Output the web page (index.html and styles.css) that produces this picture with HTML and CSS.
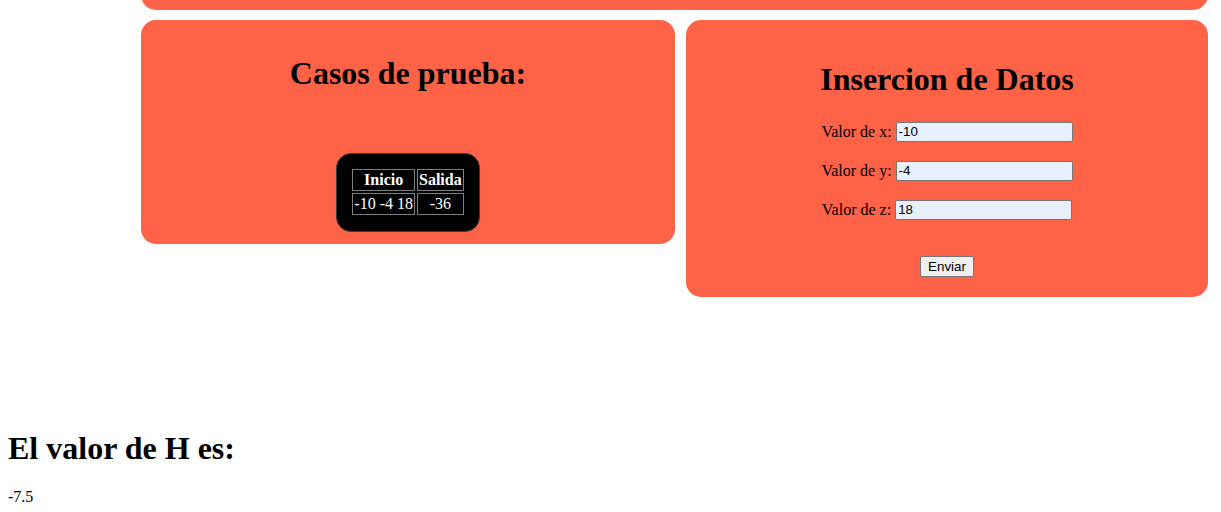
FILE: index.html
```html
<!DOCTYPE html>
<html lang="es">
<head>
<meta charset="utf-8">
<title>Casos de prueba</title>
<link rel="stylesheet" href="styles.css">
</head>
<body>
<div class="top-clip"><div class="top-bar"></div></div>
<div class="cards">
  <section class="card card-left">
    <h1 class="card-title">Casos de prueba:</h1>
    <div class="table-box">
      <table class="cases">
        <tr><th>Inicio</th><th>Salida</th></tr>
        <tr><td>-10 -4 18</td><td>-36</td></tr>
      </table>
    </div>
  </section>
  <section class="card card-right">
    <h1 class="card-title">Insercion de Datos</h1>
    <form class="data-form">
      <div class="row"><label for="x">Valor de x:</label><input id="x" class="field" type="text" value="-10"></div>
      <div class="row"><label for="y">Valor de y:</label><input id="y" class="field" type="text" value="-4"></div>
      <div class="row"><label for="z">Valor de z:</label><input id="z" class="field field-z" type="text" value="18"></div>
      <div class="row row-btn"><button class="send" type="button">Enviar</button></div>
    </form>
  </section>
</div>
<h1 class="result-title">El valor de H es:</h1>
<p class="result">-7.5</p>
</body>
</html>
```
FILE: styles.css
```css
html, body {
  background: #ffffff;
}
body {
  margin: 0 8px 8px 8px;
  font-family: "Liberation Serif", "Times New Roman", serif;
  font-size: 16px;
  color: #000;
}
.top-clip {
  margin-left: 133px;
  width: 1067px;
  height: 10px;
  overflow: hidden;
  display: flex;
  flex-direction: column;
  justify-content: flex-end;
}
.top-bar {
  flex: 0 0 30px;
  background: #ff6347;
  border-radius: 15px;
}
.cards {
  margin-top: 10px;
  margin-left: 133px;
  display: flex;
  align-items: flex-start;
  gap: 11px;
}
.card {
  background: #ff6347;
  border-radius: 15px;
  box-sizing: border-box;
  display: flex;
  flex-direction: column;
  align-items: center;
}
.card-left {
  width: 534px;
  height: 224px;
  padding: 14px;
}
.card-right {
  width: 522px;
  height: 277px;
  padding: 20px;
}
.card-title {
  font-size: 32px;
  font-weight: bold;
  margin: 21.44px 0;
  line-height: 37px;
  text-align: center;
}
.table-box {
  margin-top: 39px;
  background: #000;
  border: 1px solid #3a3a3a;
  border-radius: 15px;
  padding: 13px 13px 14px 13px;
}
.cases {
  border-collapse: separate;
  border-spacing: 2px;
  color: #fff;
  font-size: 16px;
}
.cases th, .cases td {
  border: 1px solid #808080;
  padding: 1px;
  text-align: center;
  line-height: 18px;
}
.cases th {
  font-weight: bold;
}
.data-form {
  display: flex;
  flex-direction: column;
  align-items: center;
  gap: 19px;
  padding-top: 2px;
}
.row {
  display: flex;
  align-items: center;
  gap: 4px;
  height: 20px;
}
.row label {
  line-height: 18px;
}
.field {
  box-sizing: border-box;
  width: 177px;
  height: 20px;
  border: 1px solid #767676;
  border-radius: 2px;
  padding: 1px 2px;
  background: #e8f0fe;
  font-family: "Liberation Sans", Arial, sans-serif;
  font-size: 13.33px;
  color: #000;
}
.row-btn {
  margin-top: 17px;
  height: 21px;
}
.send {
  box-sizing: border-box;
  height: 21px;
  padding: 1px 7px;
  border: 1px solid #767676;
  border-radius: 2px;
  background: #efefef;
  font-family: "Liberation Sans", Arial, sans-serif;
  font-size: 13.33px;
  color: #000;
}
.result-title {
  font-size: 32px;
  font-weight: bold;
  line-height: 37px;
  margin: 133px 0 21.44px 0;
}
.result {
  margin: 0;
  line-height: 18px;
}
```
